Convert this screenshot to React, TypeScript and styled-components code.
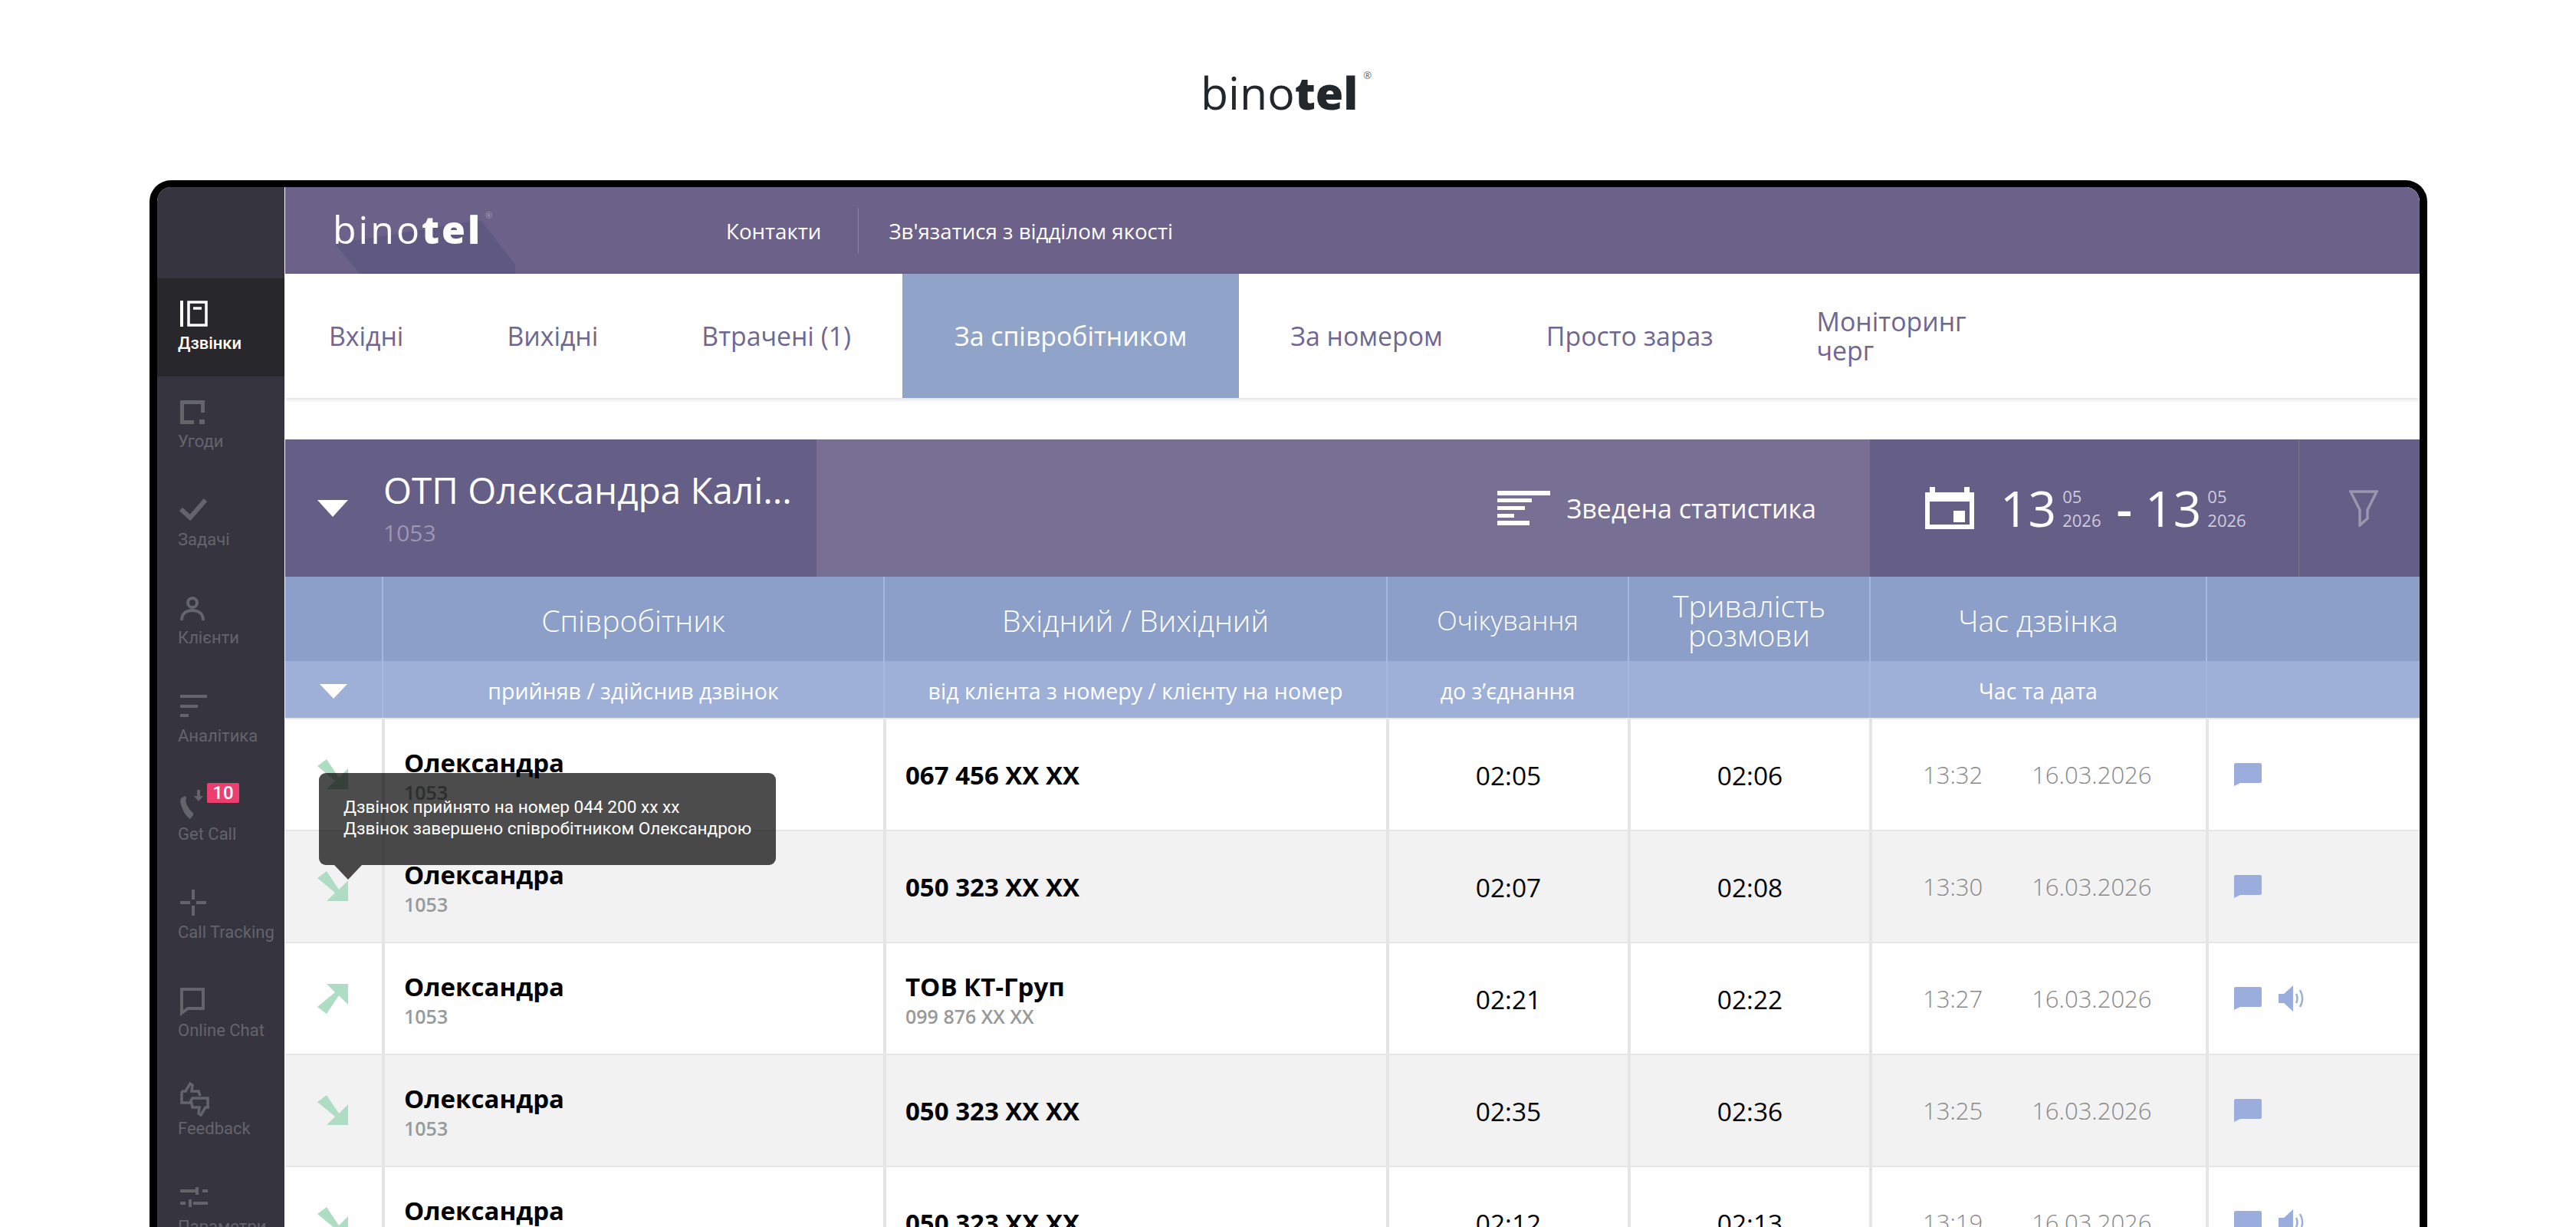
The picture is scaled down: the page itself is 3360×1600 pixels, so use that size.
import React from 'react'
import styled, { createGlobalStyle } from 'styled-components'

const GlobalStyle = createGlobalStyle`
  html, body {
    margin: 0;
    padding: 0;
    background: #ffffff;
  }
  body {
    font-family: "Open Sans", "Liberation Sans", sans-serif;
  }
`

const Page = styled.div`
  width: 3360px;
  height: 1600px;
  overflow: hidden;
  background: #ffffff;
  display: flex;
  flex-direction: column;
`

const Brand = styled.header`
  height: 235px;
  flex: none;
  padding-left: 1566px;
  padding-top: 76px;
  box-sizing: border-box;
`

const BrandLogo = styled.div`
  display: inline-flex;
  align-items: flex-start;
  color: #22272c;
  font-size: 59px;
  line-height: 88px;
  font-weight: 400;
  b {
    font-weight: 800;
  }
  sup {
    font-size: 13px;
    line-height: 13px;
    margin: 16px 0 0 7px;
    font-weight: 400;
    color: #666666;
  }
`

const Frame = styled.div`
  width: 2971px;
  margin-left: 195px;
  flex: none;
  box-sizing: border-box;
  border: 10px solid #000000;
  border-top-width: 9px;
  border-bottom: 0;
  border-radius: 28px 28px 0 0;
  display: flex;
  height: 1500px;
  overflow: hidden;
`

const Sidebar = styled.nav`
  width: 166px;
  flex: none;
  background: #35343f;
  padding-top: 119px;
`

const NavItem = styled.div<{ $active?: boolean }>`
  height: 128px;
  box-sizing: border-box;
  padding: 28px 0 0 27px;
  position: relative;
  background: ${(p) => (p.$active ? '#27272c' : 'transparent')};
  color: ${(p) => (p.$active ? '#ffffff' : '#64646b')};
`

const NavIcon = styled.div`
  height: 36px;
  display: flex;
  align-items: center;
  margin-left: 3px;
  svg {
    display: block;
    overflow: visible;
  }
`

const NavLabel = styled.div<{ $active?: boolean }>`
  margin-top: 7px;
  font-family: Roboto, "Liberation Sans", sans-serif;
  font-size: 22px;
  line-height: 28px;
  font-weight: ${(p) => (p.$active ? 500 : 400)};
  white-space: nowrap;
`

const Badge = styled.span`
  position: absolute;
  left: 65px;
  top: 18px;
  width: 42px;
  height: 26px;
  border-radius: 2px;
  background: #ec3f70;
  color: #ffffff;
  font-family: Roboto, "Liberation Sans", sans-serif;
  font-size: 24px;
  line-height: 26px;
  font-weight: 500;
  text-align: center;
`

const Content = styled.main`
  flex: 1;
  min-width: 0;
  border-left: 1px solid #ffffff;
  background: #ffffff;
`

const TopBar = styled.div`
  height: 113px;
  background: #6b6189;
  display: flex;
  align-items: center;
  color: #ffffff;
  font-size: 27.7px;
  padding-left: 575px;
  position: relative;
  overflow: hidden;
`

const TopLogo = styled.div`
  position: absolute;
  left: 62px;
  top: 20px;
  font-size: 50px;
  line-height: 70px;
  letter-spacing: 3px;
  color: #ffffff;
  filter: blur(0.7px);
  display: flex;
  align-items: flex-start;
  b {
    font-weight: 800;
  }
  sup {
    font-size: 11px;
    line-height: 11px;
    margin: 11px 0 0 4px;
    color: #a8a2bd;
  }
`

const LogoShadow = styled.svg`
  position: absolute;
  left: 0;
  top: 0;
`

const TopLink = styled.a`
  color: #ffffff;
  white-space: nowrap;
`

const TopDivider = styled.span`
  width: 1px;
  height: 59px;
  background: #8a81a5;
  margin: 0 39px 0 48px;
`

const Tabs = styled.div`
  height: 162px;
  display: flex;
  background: #ffffff;
  box-shadow: 0 2px 5px rgba(0, 0, 0, 0.14);
  position: relative;
  margin-bottom: 54px;
`

const Tab = styled.div<{ $active?: boolean }>`
  display: flex;
  align-items: center;
  padding: 0 67.5px;
  font-size: 33.8px;
  line-height: 38px;
  color: ${(p) => (p.$active ? '#ffffff' : '#6f6790')};
  background: ${(p) => (p.$active ? '#90a4ca' : 'transparent')};
  white-space: nowrap;
  &:first-child {
    padding-left: 57px;
  }
`

const GroupBar = styled.div`
  height: 179px;
  background: #786f95;
  display: flex;
  color: #ffffff;
`

const GroupPerson = styled.div`
  width: 693px;
  flex: none;
  background: #655e86;
  display: flex;
  align-items: center;
  padding-left: 42px;
  box-sizing: border-box;
`

const PersonText = styled.div`
  margin-left: 46px;
`

const PersonName = styled.div`
  font-size: 47.6px;
  line-height: 66px;
  white-space: nowrap;
  margin-top: -2px;
`

const PersonExt = styled.div`
  font-size: 30px;
  line-height: 46px;
  color: #9c96b2;
`

const Summary = styled.div`
  flex: 1;
  display: flex;
  align-items: center;
  justify-content: flex-end;
  padding-right: 70px;
  font-size: 34px;
  gap: 22px;
  white-space: nowrap;
`

const DatePanel = styled.div`
  width: 559px;
  flex: none;
  background: #655e86;
  display: flex;
  align-items: center;
  padding-left: 72px;
  box-sizing: border-box;
`

const DateDay = styled.span`
  font-size: 64px;
  line-height: 80px;
  margin-left: 34px;
`

const DateSecondDay = styled(DateDay)`
  margin-left: 17px;
`

const DateMeta = styled.div`
  margin-left: 8px;
  font-size: 22px;
  line-height: 31px;
  color: #cfcbdd;
`

const DateDash = styled.span`
  font-size: 64px;
  line-height: 80px;
  font-weight: 600;
  margin-left: 20px;
`

const FilterPanel = styled.div`
  width: 158px;
  flex: none;
  background: #655e86;
  border-left: 1px solid #7d7699;
  box-sizing: border-box;
  display: flex;
  align-items: center;
  justify-content: center;
  padding-left: 10px;
`

const gridColumns = '126px 654px 656px 315px 315px 439px 279px'

const HeadRow = styled.div`
  display: grid;
  grid-template-columns: ${gridColumns};
  height: 110px;
  background: #8c9fc8;
  color: #ffffff;
`

const SubRow = styled.div`
  display: grid;
  grid-template-columns: ${gridColumns};
  height: 74px;
  background: #9eb0d8;
  color: #ffffff;
`

const HeadCell = styled.div`
  border-left: 2px solid #a7b8e0;
  display: flex;
  align-items: center;
  justify-content: center;
  text-align: center;
  font-size: 39.2px;
  font-weight: 300;
  line-height: 38px;
  padding-top: 4px;
  box-sizing: border-box;
  &:first-child {
    border-left: 0;
  }
`

const SmallHeadCell = styled(HeadCell)`
  font-size: 34.6px;
`

const SubCell = styled(HeadCell)`
  font-size: 28.5px;
  font-weight: 400;
  white-space: nowrap;
`

const Rows = styled.div`
  position: relative;
`

const Row = styled.div<{ $alt?: boolean }>`
  display: grid;
  grid-template-columns: ${gridColumns};
  height: 146px;
  box-sizing: border-box;
  border-top: 2px solid #e6e6e6;
  background: ${(p) => (p.$alt ? '#f2f2f2' : '#ffffff')};
`

const Cell = styled.div`
  border-left: 4px solid #e5e5e5;
  display: flex;
  align-items: center;
  box-sizing: border-box;
  &:first-child {
    border-left: 0;
    padding-left: 42px;
  }
`

const PersonCell = styled(Cell)`
  padding: 2px 0 0 25px;
`

const Stack = styled.div`
  display: flex;
  flex-direction: column;
`

const Bold = styled.div`
  font-size: 33px;
  line-height: 44px;
  font-weight: 700;
  color: #000000;
  white-space: nowrap;
`

const Muted = styled.div`
  font-size: 25px;
  line-height: 32px;
  font-weight: 600;
  color: #999999;
  white-space: nowrap;
`

const Duration = styled(Cell)`
  justify-content: center;
  padding-top: 2px;
  font-size: 33.5px;
  color: #000000;
`

const Moment = styled(Cell)`
  padding-left: 66px;
  gap: 64px;
  font-size: 31px;
  font-weight: 300;
  color: #888888;
`

const Actions = styled(Cell)`
  padding-left: 33px;
  gap: 22px;
`

const Tooltip = styled.div`
  position: absolute;
  left: 44px;
  top: 72px;
  width: 596px;
  height: 120px;
  box-sizing: border-box;
  padding: 31px 0 0 32px;
  background: rgba(0, 0, 0, 0.7);
  border-radius: 9px;
  color: #ffffff;
  font-family: Roboto, "Liberation Sans", sans-serif;
  font-size: 22.6px;
  line-height: 28px;
  white-space: nowrap;
  z-index: 2;
  &::after {
    content: '';
    position: absolute;
    left: 20px;
    top: 100%;
    border-style: solid;
    border-width: 19px 18px 0 18px;
    border-color: rgba(0, 0, 0, 0.7) transparent transparent transparent;
  }
`

const DealsIcon = () => (
  <svg width="32" height="31" viewBox="0 0 32 31" fill="currentColor">
    <path d="M0 0h32v16h-5V5H5v21h13v5H0z" />
    <rect x="25" y="25" width="7" height="6" />
  </svg>
)

const CallsIcon = () => (
  <svg width="36" height="34" viewBox="0 0 36 34" fill="none" stroke="currentColor">
    <path d="M2 0v34" strokeWidth="4" />
    <rect x="11" y="2" width="23" height="30" strokeWidth="3.5" />
    <path d="M17 10h11" strokeWidth="3.5" />
  </svg>
)

const CheckIcon = () => (
  <svg width="35" height="30" viewBox="0 0 35 30" fill="none" stroke="currentColor" strokeWidth="6">
    <path d="M1 14l12 11L33 2" />
  </svg>
)

const PersonIcon = () => (
  <svg width="32" height="31" viewBox="0 0 32 31" fill="none" stroke="currentColor" strokeWidth="4">
    <circle cx="16" cy="8" r="6" />
    <path d="M2 31c0-9 6-13 14-13s14 4 14 13" />
  </svg>
)

const AnalyticsIcon = () => (
  <svg width="35" height="30" viewBox="0 0 35 30" fill="currentColor">
    <rect y="0" width="35" height="4" />
    <rect y="13" width="23" height="4" />
    <rect y="25" width="11" height="4" />
  </svg>
)

const GetCallIcon = () => (
  <svg width="30" height="38" viewBox="0 0 30 38" fill="currentColor">
    <path d="M1 11l5-3 2 2c-1 3-1 6 1 10 2 4 5 8 8 10v3l-4 5C8 35 4 28 2 22 0 18 0 14 1 11z" />
    <path d="M22 0h4v8h4l-6 7-6-7h4z" />
  </svg>
)

const TrackingIcon = () => (
  <svg width="34" height="34" viewBox="0 0 34 34" fill="currentColor">
    <rect x="15" y="0" width="4" height="13" />
    <rect x="15" y="21" width="4" height="13" />
    <rect x="0" y="15" width="13" height="4" />
    <rect x="21" y="15" width="13" height="4" />
  </svg>
)

const ChatIcon = () => (
  <svg width="32" height="35" viewBox="0 0 32 35" fill="none" stroke="currentColor" strokeWidth="4">
    <path d="M2 2h28v25H10l-8 6z" />
  </svg>
)

const FeedbackIcon = () => (
  <svg width="40" height="45" viewBox="0 0 40 45" fill="none" stroke="currentColor" strokeWidth="3.5">
    <path d="M2 12h5l6-10 3 2-1 8h9l2 6M2 12v15h12" />
    <path d="M38 33h-5l-6 10-3-2 1-8h-9l-2-9 2-3h20v12" />
  </svg>
)

const SlidersIcon = () => (
  <svg width="36" height="26" viewBox="0 0 36 26" fill="currentColor">
    <rect x="0" y="3" width="20" height="4" />
    <rect x="20" y="0" width="4" height="10" />
    <rect x="29" y="3" width="7" height="4" />
    <rect x="0" y="19" width="7" height="4" />
    <rect x="11" y="16" width="4" height="10" />
    <rect x="17" y="19" width="19" height="4" />
  </svg>
)

const Triangle = () => (
  <svg width="40" height="22" viewBox="0 0 40 22" fill="#ffffff">
    <path d="M0 0h40L20 22z" />
  </svg>
)

const SmallTriangle = () => (
  <svg width="36" height="19" viewBox="0 0 36 19" fill="#ffffff">
    <path d="M0 0h36L18 19z" />
  </svg>
)

const StatsIcon = () => (
  <svg width="69" height="45" viewBox="0 0 69 45" fill="#ffffff">
    <rect y="0" width="69" height="6" />
    <rect y="10" width="45" height="5" />
    <rect y="20" width="36" height="5" />
    <rect y="30" width="22" height="5" />
    <rect y="39" width="42" height="6" />
  </svg>
)

const CalendarIcon = () => (
  <svg width="64" height="55" viewBox="0 0 64 55" fill="#ffffff">
    <path d="M6 0h7v7h38V0h7v7h6v48H0V7h6zM6 19v30h52V19z" fillRule="evenodd" />
    <rect x="37" y="31" width="15" height="15" />
  </svg>
)

const FilterIcon = () => (
  <svg width="38" height="48" viewBox="0 0 38 48" fill="none" stroke="#9b96ad" strokeWidth="3.5">
    <path d="M2 2h34L24 26v11l-10 9V26z" />
  </svg>
)

const DirectionArrow = ({ out }: { out?: boolean }) => (
  <svg width="40" height="40" viewBox="0 0 40 40" fill="#aeddc3">
    <path
      d="M0 9L12 0l16 24 12-12v27H12l11-11z"
      transform={out ? 'matrix(1 0 0 -1 0 40)' : undefined}
    />
  </svg>
)

const BubbleIcon = () => (
  <svg width="36" height="30" viewBox="0 0 36 30" fill="#9aaddc">
    <path d="M2 0h32a2 2 0 012 2v22a2 2 0 01-2 2H8l-8 4V2a2 2 0 012-2z" />
  </svg>
)

const SpeakerIcon = () => (
  <svg width="34" height="34" viewBox="0 0 34 34" fill="none" stroke="#9aaddc">
    <path d="M0 11h7L19 0v34L7 23H0z" fill="#9aaddc" stroke="none" />
    <path d="M23 11c2 4 2 8 0 12" strokeWidth="2.5" />
    <path d="M28 6c4 7 4 15 0 22" strokeWidth="2.5" />
  </svg>
)

const navItems = [
  { label: 'Угоди', icon: <DealsIcon /> },
  { label: 'Задачі', icon: <CheckIcon /> },
  { label: 'Клієнти', icon: <PersonIcon /> },
  { label: 'Аналітика', icon: <AnalyticsIcon /> },
  { label: 'Get Call', icon: <GetCallIcon />, badge: '10' },
  { label: 'Call Tracking', icon: <TrackingIcon /> },
  { label: 'Online Chat', icon: <ChatIcon /> },
  { label: 'Feedback', icon: <FeedbackIcon /> },
  { label: 'Параметри', icon: <SlidersIcon /> },
]

const tabs = ['Вхідні', 'Вихідні', 'Втрачені (1)', 'За співробітником', 'За номером', 'Просто зараз']

const calls = [
  { number: '067 456 XX XX', wait: '02:05', talk: '02:06', time: '13:32' },
  { number: '050 323 XX XX', wait: '02:07', talk: '02:08', time: '13:30' },
  { number: 'ТОВ КТ-Груп', sub: '099 876 XX XX', wait: '02:21', talk: '02:22', time: '13:27', out: true, audio: true },
  { number: '050 323 XX XX', wait: '02:35', talk: '02:36', time: '13:25' },
  { number: '050 323 XX XX', wait: '02:12', talk: '02:13', time: '13:19', audio: true },
]

export default function App() {
  return (
    <Page>
      <GlobalStyle />
      <Brand>
        <BrandLogo>
          <span>
            bino<b>tel</b>
          </span>
          <sup>®</sup>
        </BrandLogo>
      </Brand>
      <Frame>
        <Sidebar>
          <NavItem $active>
            <NavIcon>
              <CallsIcon />
            </NavIcon>
            <NavLabel $active>Дзвінки</NavLabel>
          </NavItem>
          {navItems.map((item) => (
            <NavItem key={item.label}>
              <NavIcon>{item.icon}</NavIcon>
              <NavLabel>{item.label}</NavLabel>
              {item.badge && <Badge>{item.badge}</Badge>}
            </NavItem>
          ))}
        </Sidebar>
        <Content>
          <TopBar>
            <LogoShadow width="320" height="113" viewBox="0 0 320 113">
              <path d="M65 74L97 113H300V101L255 43z" fill="#5f5880" />
            </LogoShadow>
            <TopLogo>
              <span>
                bino<b>tel</b>
              </span>
              <sup>®</sup>
            </TopLogo>
            <TopLink>Контакти</TopLink>
            <TopDivider />
            <TopLink>Зв'язатися з відділом якості</TopLink>
          </TopBar>
          <Tabs>
            {tabs.map((tab) => (
              <Tab key={tab} $active={tab === 'За співробітником'}>
                {tab}
              </Tab>
            ))}
            <Tab>
              Моніторинг
              <br />
              черг
            </Tab>
          </Tabs>
          <GroupBar>
            <GroupPerson>
              <Triangle />
              <PersonText>
                <PersonName>ОТП Олександра Калі...</PersonName>
                <PersonExt>1053</PersonExt>
              </PersonText>
            </GroupPerson>
            <Summary>
              <StatsIcon />
              Зведена статистика
            </Summary>
            <DatePanel>
              <CalendarIcon />
              <DateDay>13</DateDay>
              <DateMeta>
                05
                <br />
                2026
              </DateMeta>
              <DateDash>-</DateDash>
              <DateSecondDay>13</DateSecondDay>
              <DateMeta>
                05
                <br />
                2026
              </DateMeta>
            </DatePanel>
            <FilterPanel>
              <FilterIcon />
            </FilterPanel>
          </GroupBar>
          <HeadRow>
            <HeadCell />
            <HeadCell>Співробітник</HeadCell>
            <HeadCell>Вхідний / Вихідний</HeadCell>
            <SmallHeadCell>Очікування</SmallHeadCell>
            <HeadCell>
              Тривалість
              <br />
              розмови
            </HeadCell>
            <HeadCell>Час дзвінка</HeadCell>
            <HeadCell />
          </HeadRow>
          <SubRow>
            <SubCell>
              <SmallTriangle />
            </SubCell>
            <SubCell>прийняв / здійснив дзвінок</SubCell>
            <SubCell>від клієнта з номеру / клієнту на номер</SubCell>
            <SubCell>до з’єднання</SubCell>
            <SubCell />
            <SubCell>Час та дата</SubCell>
            <SubCell />
          </SubRow>
          <Rows>
            <Tooltip>
              Дзвінок прийнято на номер 044 200 xx xx
              <br />
              Дзвінок завершено співробітником Олександрою
            </Tooltip>
            {calls.map((call, i) => (
              <Row key={call.time} $alt={i % 2 === 1}>
                <Cell>
                  <DirectionArrow out={call.out} />
                </Cell>
                <PersonCell>
                  <Stack>
                    <Bold>Олександра</Bold>
                    <Muted>1053</Muted>
                  </Stack>
                </PersonCell>
                <PersonCell>
                  <Stack>
                    <Bold>{call.number}</Bold>
                    {call.sub && <Muted>{call.sub}</Muted>}
                  </Stack>
                </PersonCell>
                <Duration>{call.wait}</Duration>
                <Duration>{call.talk}</Duration>
                <Moment>
                  <span>{call.time}</span>
                  <span>16.03.2026</span>
                </Moment>
                <Actions>
                  <BubbleIcon />
                  {call.audio && <SpeakerIcon />}
                </Actions>
              </Row>
            ))}
          </Rows>
        </Content>
      </Frame>
    </Page>
  )
}
